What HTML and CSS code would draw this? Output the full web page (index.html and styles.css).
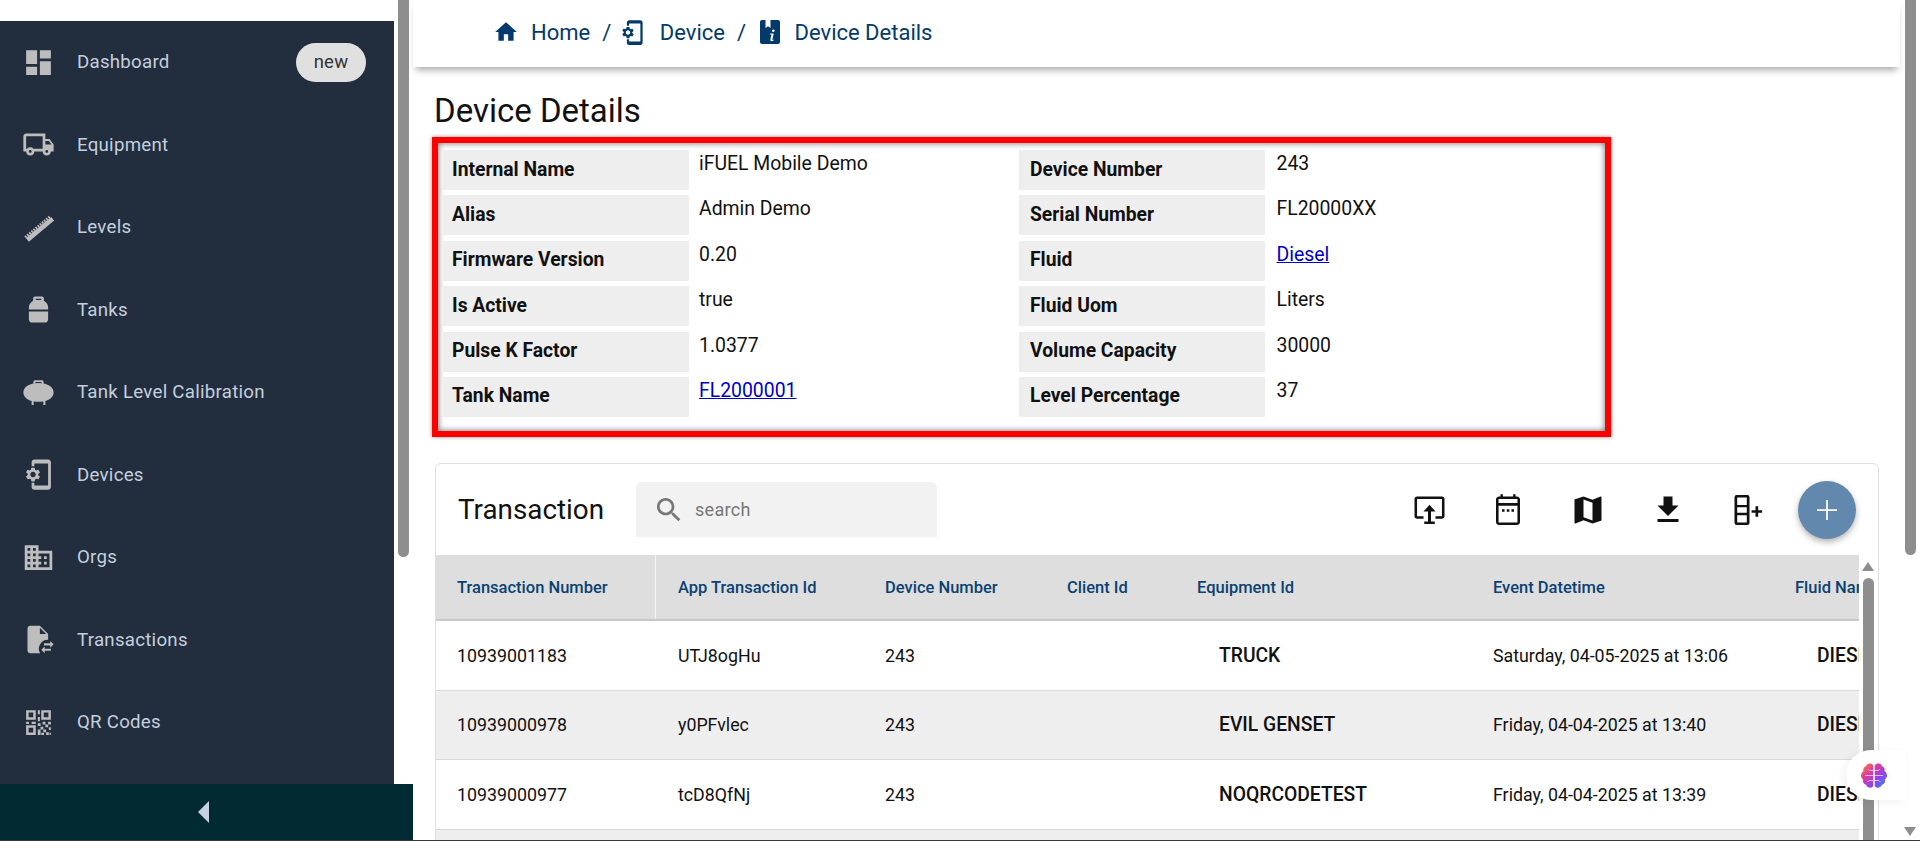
FILE: index.html
```html
<!DOCTYPE html>
<html lang="en">
<head>
<meta charset="utf-8">
<title>Device Details</title>
<link rel="stylesheet" href="styles.css">
</head>
<body>
<div class="app">
  <div class="left">
    <div class="left-body">
      <nav class="nav">
        <a class="nav-item"><span class="nav-icon"><svg viewBox="0 0 24 24"><path d="M3 13h8V3H3v10zm0 8h8v-6H3v6zm10 0h8V11h-8v10zm0-18v6h8V3h-8z"/></svg></span><span class="nav-text">Dashboard</span><span class="badge">new</span></a>
        <a class="nav-item"><span class="nav-icon"><svg viewBox="0 0 24 24"><path d="M20 8h-3V4H3c-1.1 0-2 .9-2 2v11h2c0 1.66 1.34 3 3 3s3-1.34 3-3h6c0 1.66 1.34 3 3 3s3-1.34 3-3h2v-5l-3-4zm-.5 1.5 1.96 2.5H17V9.5h2.5zM6 18c-.55 0-1-.45-1-1s.45-1 1-1 1 .45 1 1-.45 1-1 1zm2.22-3c-.55-.61-1.33-1-2.22-1s-1.67.39-2.22 1H3V6h12v9H8.22zM18 18c-.55 0-1-.45-1-1s.45-1 1-1 1 .45 1 1-.45 1-1 1z"/></svg></span><span class="nav-text">Equipment</span></a>
        <a class="nav-item"><span class="nav-icon"><svg viewBox="0 0 24 24"><g transform="rotate(-40 12 12)" fill="none" stroke="#bdbdbd"><path stroke-width="3.400" d="M0 13.700h24"/><path stroke-width="1.800" stroke-dasharray="1.200 .8" d="M0 11.200h24"/></g></svg></span><span class="nav-text">Levels</span></a>
        <a class="nav-item"><span class="nav-icon"><svg viewBox="0 0 24 24"><path d="M9.500 2.500c-.8 0-1.400.6-1.400 1.400V5.600C6.300 6.500 5 8.300 5 10.500V12h14v-1.500c0-2.200-1.300-4-3.100-4.900V3.900c0-.8-.6-1.400-1.400-1.400h-5zm.5 1.600h4v1H10v-1zM5 13.500V19c0 1.400 1 2.500 2.500 2.500h9c1.500 0 2.500-1.100 2.500-2.500v-5.500H5z"/></svg></span><span class="nav-text">Tanks</span></a>
        <a class="nav-item"><span class="nav-icon"><svg viewBox="0 0 24 24"><path d="M9.500 3c-.7 0-1.200.5-1.200 1.200v1.300C4.300 6.300 1 8.500 1 12c0 3.200 2.900 5.400 6 6.200V21h1.500v-2.500c1.100.2 2.300.3 3.500.3s2.400-.1 3.500-.3V21H17v-2.800c3.100-.8 6-3 6-6.200 0-3.500-3.300-5.700-7.300-6.500V4.200c0-.7-.5-1.200-1.200-1.200h-5zm.3 1.400h4.400v.9a20 20 0 0 0-4.400 0v-.9z"/></svg></span><span class="nav-text">Tank Level Calibration</span></a>
        <a class="nav-item"><span class="nav-icon"><svg viewBox="0 0 24 24"><path d="M11.800 12.500v-1l1.100-.8c.1-.1.1-.2.1-.3l-1-1.700c-.1-.1-.2-.2-.3-.1l-1.300.4c-.3-.2-.6-.4-.9-.5l-.2-1.300c0-.1-.1-.2-.3-.2H7c-.1 0-.2.1-.3.2l-.2 1.300c-.3.1-.6.3-.9.5l-1.300-.5c-.1 0-.2 0-.3.1l-1 1.700c-.1.1 0 .2.1.3l1.100.8v1l-1.100.8c-.1.2-.1.3-.1.4l1 1.700c.1.1.2.2.3.1l1.400-.4c.3.2.6.4.9.5l.2 1.300c-.1.1.1.2.2.2h2c.1 0 .2-.1.3-.2l.2-1.300c.3-.1.6-.3.9-.5l1.300.5c.1 0 .2 0 .3-.1l1-1.700c.1-.1 0-.2-.1-.3l-1.100-.9zM8 14c-1.100 0-2-.9-2-2s.9-2 2-2 2 .9 2 2-.9 2-2 2zM19 1H9c-1.100 0-2 .9-2 2v3h2V4h10v16H9v-2H7v3c0 1.100.9 2 2 2h10c1.100 0 2-.9 2-2V3c0-1.100-.9-2-2-2z"/></svg></span><span class="nav-text">Devices</span></a>
        <a class="nav-item"><span class="nav-icon"><svg viewBox="0 0 24 24"><path d="M12 7V3H2v18h20V7H12zM6 19H4v-2h2v2zm0-4H4v-2h2v2zm0-4H4V9h2v2zm0-4H4V5h2v2zm4 12H8v-2h2v2zm0-4H8v-2h2v2zm0-4H8V9h2v2zm0-4H8V5h2v2zm10 12h-8v-2h2v-2h-2v-2h2v-2h-2V9h8v10zm-2-8h-2v2h2v-2zm0 4h-2v2h2v-2z"/></svg></span><span class="nav-text">Orgs</span></a>
        <a class="nav-item"><span class="nav-icon"><svg viewBox="0 0 24 24"><path d="M6 2C4.900 2 4 2.900 4 4v16c0 1.100.9 2 2 2h7.200A6.500 6.500 0 0 1 19 12.200V8l-6-6H6zm7 1.500L17.500 8H13V3.500z"/><path d="M23 15.500 20.500 13v1.800H16v1.500h4.500V18L23 15.500zM14 19.500l2.500 2.500v-1.800H21v-1.500h-4.500V17L14 19.500z"/></svg></span><span class="nav-text">Transactions</span></a>
        <a class="nav-item"><span class="nav-icon"><svg viewBox="0 0 24 24"><path d="M3 3h7v7H3V3zm1.800 1.800v3.400h3.400V4.800H4.800zM14 3h7v7h-7V3zm1.800 1.800v3.400h3.400V4.800h-3.400zM3 14h7v7H3v-7zm1.800 1.800v3.400h3.400v-3.400H4.800zM11.500 3h1.500v3h-1.500zM11.500 8h1.500v3h-1.500zM3 11.500h2v1.500H3zM7 11.500h3v1.500H7zM11.500 12.500h2v2h-2zM15 11.500h2v2h-2zM19 11.500h2v2h-2zM17 13.500h2v2h-2zM13.500 15h2v2h-2zM19.500 15.500H21v2h-1.500zM11.500 17h2v4h-2zM15.500 17h2v2h-2zM14 19.500h2V21h-2zM17.500 19h2v2h-2zM20 19.500h1V21h-1z"/></svg></span><span class="nav-text">QR Codes</span></a>
      </nav>
      <div class="side-scroll"><div class="thumb side-thumb"></div></div>
    </div>
    <div class="collapse"><span class="collapse-arrow"></span></div>
  </div>

  <main class="main">
    <header class="topbar">
      <svg class="crumb-icon home" viewBox="0 0 24 24"><path d="M10 20v-6h4v6h5v-8h3L12 3 2 12h3v8z"/></svg>
      <span class="crumb">Home</span>
      <span class="sep">/</span>
      <svg class="crumb-icon dev" viewBox="0 0 24 24"><path d="M11.800 12.500v-1l1.100-.8c.1-.1.1-.2.1-.3l-1-1.700c-.1-.1-.2-.2-.3-.1l-1.300.4c-.3-.2-.6-.4-.9-.5l-.2-1.300c0-.1-.1-.2-.3-.2H7c-.1 0-.2.1-.3.2l-.2 1.300c-.3.1-.6.3-.9.5l-1.300-.5c-.1 0-.2 0-.3.1l-1 1.700c-.1.1 0 .2.1.3l1.100.8v1l-1.100.8c-.1.2-.1.3-.1.4l1 1.700c.1.1.2.2.3.1l1.400-.4c.3.2.6.4.9.5l.2 1.300c-.1.1.1.2.2.2h2c.1 0 .2-.1.3-.2l.2-1.300c.3-.1.6-.3.9-.5l1.300.5c.1 0 .2 0 .3-.1l1-1.700c.1-.1 0-.2-.1-.3l-1.100-.9zM8 14c-1.100 0-2-.9-2-2s.9-2 2-2 2 .9 2 2-.9 2-2 2zM19 1H9c-1.100 0-2 .9-2 2v3h2V4h10v16H9v-2H7v3c0 1.100.9 2 2 2h10c1.100 0 2-.9 2-2V3c0-1.100-.9-2-2-2z"/></svg>
      <span class="crumb">Device</span>
      <span class="sep">/</span>
      <svg class="crumb-icon det" viewBox="0 0 20 24"><path fill-rule="evenodd" d="M2 0h3.500v8l2.500-1.800L10.500 8V0H18c1.100 0 2 .9 2 2v20c0 1.100-.9 2-2 2H2c-1.100 0-2-.9-2-2V2C0 .9.900 0 2 0zm11.300 9.500a1.300 1.300 0 1 0 0 2.600 1.300 1.300 0 0 0 0-2.600zM10.200 13.500l-.2 1h1.500l-1.200 5.200c-.2 1 .4 1.500 1.200 1.500.9 0 1.700-.4 2.300-1l-.3-.7c-.4.300-.9.500-1.200.4l1.400-6.400h-3.500z"/></svg>
      <span class="crumb">Device Details</span>
    </header>

    <div class="content">
      <h1 class="page-title">Device Details</h1>
      <section class="details">
        <div class="row"><div class="label">Internal Name</div><div class="value">iFUEL Mobile Demo</div></div>
        <div class="row"><div class="label">Device Number</div><div class="value">243</div></div>
        <div class="row"><div class="label">Alias</div><div class="value">Admin Demo</div></div>
        <div class="row"><div class="label">Serial Number</div><div class="value">FL20000XX</div></div>
        <div class="row"><div class="label">Firmware Version</div><div class="value">0.20</div></div>
        <div class="row"><div class="label">Fluid</div><div class="value"><a class="link" href="#">Diesel</a></div></div>
        <div class="row"><div class="label">Is Active</div><div class="value">true</div></div>
        <div class="row"><div class="label">Fluid Uom</div><div class="value">Liters</div></div>
        <div class="row"><div class="label">Pulse K Factor</div><div class="value">1.0377</div></div>
        <div class="row"><div class="label">Volume Capacity</div><div class="value">30000</div></div>
        <div class="row"><div class="label">Tank Name</div><div class="value"><a class="link" href="#">FL2000001</a></div></div>
        <div class="row"><div class="label">Level Percentage</div><div class="value">37</div></div>
      </section>

      <section class="card">
        <div class="card-head">
          <h2 class="card-title">Transaction</h2>
          <div class="search">
            <svg class="search-icon" viewBox="0 0 24 24"><path d="M15.500 14h-.79l-.28-.27C15.410 12.590 16 11.110 16 9.500 16 5.910 13.090 3 9.500 3S3 5.910 3 9.500 5.910 16 9.500 16c1.610 0 3.090-.59 4.230-1.570l.27.28v.79l5 4.990L20.490 19l-4.990-5zm-6 0C7.010 14 5 11.990 5 9.500S7.010 5 9.500 5 14 7.010 14 9.500 11.990 14 9.500 14z"/></svg>
            <span class="search-text">search</span>
          </div>
          <div class="tools">
            <span class="tool"><svg viewBox="0 0 24 24"><path d="M4.800 3h16.400A1.800 1.800 0 0 1 23 4.800V16a1.800 1.800 0 0 1-1.800 1.800H17v-1.600h4.300V4.600H4.700v11.600H9v1.600H4.800A1.800 1.800 0 0 1 3 16V4.800A1.800 1.800 0 0 1 4.800 3zM13 8.500l4 4.500h-3v6.700h2.500V21.300h-7v-1.600H12V13H9l4-4.500z"/></svg></span>
            <span class="tool"><svg viewBox="0 0 24 24"><path d="M7 1.500h1.600V3h6.800V1.500H17V3h1c1.100 0 2 .9 2 2v15c0 1.100-.9 2-2 2H6c-1.100 0-2-.9-2-2V5c0-1.100.9-2 2-2h1V1.500zM5.700 4.700v2.700h12.600V4.700H5.700zm0 4.400v11.200h12.600V9.100H5.700zM8 11.500h1.700v1.700H8zM11.200 11.500h1.700v1.700h-1.700zM14.300 11.500H16v1.700h-1.700z"/></svg></span>
            <span class="tool"><svg viewBox="0 0 24 24"><path d="M20.500 3l-.16.030L15 5.100 9 3 3.360 4.900c-.21.070-.36.250-.36.480V20.500c0 .28.220.5.5.5l.16-.03L9 18.900l6 2.100 5.640-1.900c.21-.07.360-.25.360-.48V3.500c0-.28-.22-.5-.5-.5zM15 19l-6-2.110V5l6 2.110V19z"/></svg></span>
            <span class="tool"><svg viewBox="0 0 24 24"><path d="M19 9h-4V3H9v6H5l7 7 7-7zM5 18v2h14v-2H5z"/></svg></span>
            <span class="tool"><svg viewBox="0 0 24 24"><path d="M4.500 2h7A1.500 1.500 0 0 1 13 3.500v17a1.500 1.500 0 0 1-1.500 1.500h-7A1.500 1.500 0 0 1 3 20.500v-17A1.500 1.500 0 0 1 4.500 2zm.3 1.700v4.900h6.400V3.700H4.800zm0 6.500v3.600h6.400v-3.600H4.800zm0 5.300v4.800h6.400v-4.800H4.800zM17 9.500h1.800v2.600h2.600v1.800h-2.600v2.600H17v-2.600h-2.600v-1.800H17V9.500z"/></svg></span>
            <button class="fab"><svg viewBox="0 0 24 24"><path d="M11.300 4h1.400v7.300H20v1.400h-7.300V20h-1.400v-7.300H4v-1.400h7.300V4z"/></svg></button>
          </div>
        </div>
        <div class="table-area">
          <div class="table">
            <div class="tr head">
              <div class="th first">Transaction Number</div><div class="th">App Transaction Id</div><div class="th">Device Number</div><div class="th">Client Id</div><div class="th">Equipment Id</div><div class="th">Event Datetime</div><div class="th">Fluid Name</div>
            </div>
            <div class="tr">
              <div class="td">10939001183</div><div class="td">UTJ8ogHu</div><div class="td">243</div><div class="td"></div><div class="td strong">TRUCK</div><div class="td">Saturday, 04-05-2025 at 13:06</div><div class="td strong">DIESEL</div>
            </div>
            <div class="tr alt">
              <div class="td">10939000978</div><div class="td">y0PFvlec</div><div class="td">243</div><div class="td"></div><div class="td strong">EVIL GENSET</div><div class="td">Friday, 04-04-2025 at 13:40</div><div class="td strong">DIESEL</div>
            </div>
            <div class="tr">
              <div class="td">10939000977</div><div class="td">tcD8QfNj</div><div class="td">243</div><div class="td"></div><div class="td strong">NOQRCODETEST</div><div class="td">Friday, 04-04-2025 at 13:39</div><div class="td strong">DIESEL</div>
            </div>
            <div class="tr alt"></div>
          </div>
          <div class="table-scroll">
            <span class="arrow-up"></span>
            <div class="thumb table-thumb"></div>
          </div>
        </div>
      </section>
    </div>
  </main>

  <aside class="page-scroll">
    <div class="thumb page-thumb"></div>
    <span class="arrow-down"></span>
  </aside>

  <div class="brain">
    <svg viewBox="0 0 26 25">
      <defs><linearGradient id="bg" x1="0" y1="0" x2="1" y2="1"><stop offset="0" stop-color="#f58a2c"/><stop offset=".35" stop-color="#e2399e"/><stop offset=".65" stop-color="#8a44ee"/><stop offset="1" stop-color="#2f8cf5"/></linearGradient></defs>
      <path fill="url(#bg)" d="M12.200 2.500C11.500 1 10 .5 8.500.6 6.800.7 5.500 1.800 5 3.200 3.400 3.600 2.300 5 2.300 6.600c0 .5.100 1 .3 1.400C1 9 0 10.600 0 12.500c0 1.700.8 3.100 2.200 4-.2.500-.3 1-.3 1.500 0 1.900 1.400 3.400 3.200 3.700.6 1.800 2.200 3 4.100 3 1.300 0 2.400-.6 3-1.500V2.500zM13.800 2.500C14.500 1 16 .5 17.500.6c1.700.1 3 1.200 3.500 2.600 1.600.4 2.700 1.800 2.700 3.400 0 .5-.1 1-.3 1.400 1.600 1 2.600 2.600 2.600 4.500 0 1.700-.8 3.100-2.200 4 .2.500.3 1 .3 1.500 0 1.900-1.400 3.400-3.200 3.700-.6 1.800-2.200 3-4.100 3-1.300 0-2.400-.6-3-1.500V2.500z"/>
      <path fill="none" stroke="#fff" stroke-width=".9" opacity=".7" d="M12 7.500H8.500L7 6M12 12.500H4M12 17.500H8L6.500 19M14 7.500h3.500L19 6M14 12.500h8M14 17.500h4l1.500 1.500"/>
    </svg>
  </div>
</div>
<div class="baseline"></div>
</body>
</html>
```

FILE: styles.css
```css
* { box-sizing: border-box; }
html, body { margin: 0; padding: 0; height: 100%; overflow: hidden; background: #fff; }
body { font-family: Roboto, "Liberation Sans", sans-serif; color: #111; }

.app { display: flex; height: 840px; position: relative; overflow: hidden; background: #fff; }
.baseline { height: 1px; background: #3a3a3a; }

/* left column */
.left { width: 413px; flex: none; display: flex; flex-direction: column; }
.left-body { flex: 1; display: flex; min-height: 0; }
.nav { width: 394px; margin-top: 21px; background: #222e3e; display: flex; flex-direction: column; }
.nav-item { height: 82.5px; flex: none; display: flex; align-items: center; padding: 0 28px 0 22px; color: #c4cfde; font-size: 18.7px; letter-spacing: .25px; }
.nav-icon { width: 33px; height: 33px; flex: none; margin-right: 22px; }
.nav-icon svg { display: block; width: 33px; height: 33px; fill: #bdbdbd; }
.nav-text { flex: 1; }
.badge { width: 70px; height: 39px; border-radius: 20px; background: #e0e0e0; color: #333; font-size: 18.5px; display: flex; align-items: center; justify-content: center; }
.side-scroll { width: 19px; padding-left: 4px; }
.thumb { background: #8e8e8e; border-radius: 0 0 6px 6px; }
.side-thumb { width: 11px; height: 557px; }
.collapse { height: 56px; background: #012a33; display: flex; align-items: center; justify-content: center; padding-right: 6px; }
.collapse-arrow { width: 0; height: 0; border-style: solid; border-width: 11px 11px 11px 0; border-color: transparent #c5d0e0 transparent transparent; }

/* main */
.main { flex: 1; min-width: 0; display: flex; flex-direction: column; }
.topbar { height: 67px; flex: none; display: flex; align-items: center; padding: 0 0 3px 80px; color: #033a6b; font-size: 22px; box-shadow: 0 6px 7px -3px rgba(0,0,0,.35); }
.crumb-icon { fill: #033a6b; flex: none; }
.crumb-icon.home { width: 26px; height: 26px; margin-right: 12px; }
.crumb-icon.dev { width: 27px; height: 27px; margin-right: 13.500px; margin-left: -5px; }
.crumb-icon.det { width: 20px; height: 24px; margin-right: 15px; margin-left: .5px; }
.sep { margin: 0 13px 0 12px; }

.content { padding-left: 19px; flex: 1; }
.page-title { margin: 20px 0 2px 2px; font-size: 33px; line-height: 48px; font-weight: 400; color: #111; }

.details { width: 1179px; height: 300px; border: 6px solid #f00; padding: 7px 5px; display: grid; grid-template-columns: 576px 576px; grid-auto-rows: 40px; row-gap: 5.400px; box-shadow: 0 0 4px rgba(0,0,0,.45), inset 0 0 6px rgba(0,0,0,.6); }
.row { display: flex; }
.label { width: 246px; flex: none; background: #eee; padding: 0 0 2px 9px; display: flex; align-items: center; font-weight: 700; font-size: 19.300px; color: #111; }
.value { padding: 2px 0 0 10px; font-size: 19.400px; line-height: 24px; color: #111; }
.row:nth-child(even) .label { padding-left: 11px; }
.row:nth-child(even) .value { padding-left: 11.500px; }
.link { color: #0000c8; }

.card { margin: 26px 0 0 3px; width: 1444px; height: 400px; border: 1px solid #e0e0e0; border-radius: 6px 6px 0 0; overflow: hidden; }
.card-head { height: 91px; display: flex; align-items: center; padding: 0 22px; }
.card-title { margin: 0; width: 178px; flex: none; font-size: 27.800px; font-weight: 400; color: #111; }
.search { width: 301px; height: 55px; flex: none; background: #f2f2f2; border-radius: 6px 6px 0 0; display: flex; align-items: center; padding-left: 17px; }
.search-icon { width: 32px; height: 32px; fill: #777; flex: none; margin-right: 10px; }
.search-text { font-size: 18px; color: #777; letter-spacing: .3px; }
.tools { margin-left: auto; display: flex; align-items: center; }
.tool { width: 80px; display: flex; justify-content: center; }
.tool svg { width: 36px; height: 36px; fill: #111; display: block; }
.fab { width: 58px; height: 58px; margin-left: 10px; border: 0; padding: 14px; border-radius: 50%; background: #6388ad; box-shadow: 0 3px 6px rgba(0,0,0,.3); }
.fab svg { display: block; width: 30px; height: 30px; fill: #fff; }

.table-area { display: flex; }
.table { width: 1423px; overflow: hidden; }
.tr { display: grid; grid-template-columns: 221px 207px 182px 130px 296px 302px 200px; padding-left: 21px; height: 69.500px; align-items: center; border-bottom: 1px solid #d8d8d8; width: 1600px; font-size: 17.800px; color: #111; }
.tr.alt { background: #eee; }
.tr.head { height: 66px; background: #dedede; border-bottom: 2px solid #c8c8c8; }
.th { font-size: 16.500px; font-weight: 500; color: #0b4272; }
.th.first { position: relative; height: 100%; display: flex; align-items: center; }
.th.first::after { content: ""; position: absolute; right: 22px; top: 0; bottom: 0; width: 1.500px; background: #f4f4f4; }
.td.strong { font-weight: 500; font-size: 19.300px; padding-left: 22px; }
.table-scroll { width: 19px; padding: 7px 0 0 4px; display: flex; flex-direction: column; }
.arrow-up { width: 0; height: 0; margin-left: -1px; border-style: solid; border-width: 0 6.500px 9px; border-color: transparent transparent #8e8e8e; }
.table-thumb { margin-top: 7px; width: 11px; flex: 1; border-radius: 6px 6px 0 0; }

/* page scrollbar */
.page-scroll { width: 20px; flex: none; padding-left: 5px; display: flex; flex-direction: column; }
.page-thumb { width: 11px; height: 555px; }
.arrow-down { margin: 272px 0 0 -1px; width: 0; height: 0; border-style: solid; border-width: 9px 6.500px 0; border-color: #8e8e8e transparent transparent; }

.brain { position: absolute; left: 1846px; top: 750px; width: 60px; height: 50px; border-radius: 25px 0 0 25px; background: #fff; display: flex; align-items: center; padding-left: 15px; box-shadow: -3px 2px 8px rgba(0,0,0,.06); }
.brain svg { display: block; width: 26px; height: 25px; }
```
